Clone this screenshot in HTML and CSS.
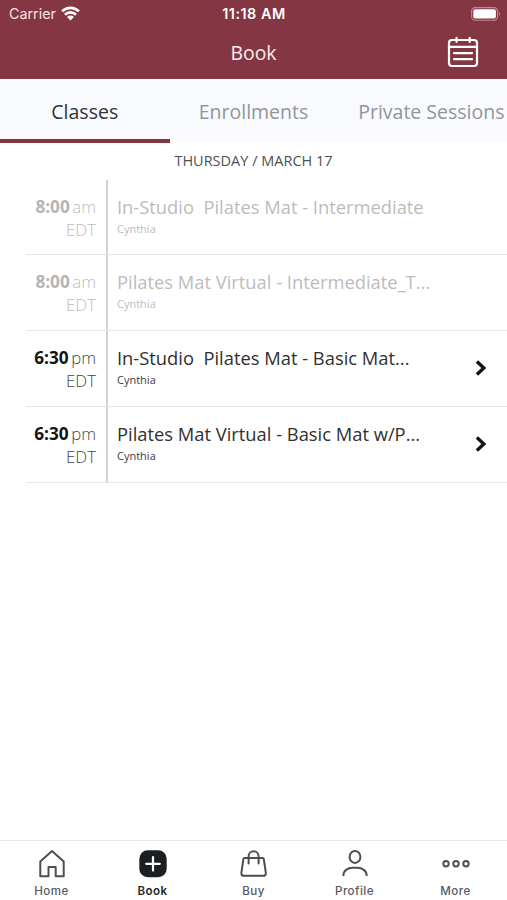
FILE: index.html
```html
<!DOCTYPE html>
<html lang="en">
<head>
<meta charset="utf-8">
<title>Book</title>
<link rel="stylesheet" href="styles.css">
</head>
<body>
<header class="header">
  <div class="status">
    <div class="carrier"><span>Carrier</span>
      <svg width="19" height="15" viewBox="0 0 19 15" fill="none" stroke="#fff" stroke-width="2.7"><path d="M1.1 5.3a12 12 0 0 1 16.8 0M4 8.7a7.8 7.8 0 0 1 11 0"/><path d="M6.1 11a4.8 4.8 0 0 1 6.8 0L9.5 14.4z" fill="#fff" stroke="none"/></svg>
    </div>
    <div class="clock">11:18 AM</div>
    <svg class="battery" width="30" height="14" viewBox="0 0 30 14"><rect x=".6" y=".6" width="26" height="12.6" rx="3.6" fill="none" stroke="#bd8b92" stroke-width="1.1"/><rect x="2.3" y="2.3" width="22.6" height="9.2" rx="2" fill="#fff"/><path d="M28 4.7q2 2.2 0 4.4z" fill="#bd8b92"/></svg>
  </div>
  <div class="titlebar">
    <h1>Book</h1>
    <svg class="calendar" width="32" height="32" viewBox="0 0 32 32" fill="none" stroke="#fff" stroke-width="2.2" stroke-linecap="round"><rect x="2" y="4" width="28" height="26" rx="3"/><path d="M2 10.8h28M9.5 1.8v4.2M22.7 1.8v4.2M7 17.2h18M7 23.2h18"/></svg>
  </div>
</header>
<nav class="tabs">
  <div class="tab selected"><span>Classes</span></div>
  <div class="tab"><span>Enrollments</span></div>
  <div class="tab private"><span>Private Sessions</span></div>
</nav>
<main>
  <h2 class="date">THURSDAY / MARCH 17</h2>
  <div class="list">
    <article class="row past">
      <div class="time"><div><b>8:00</b><span>am</span></div><div>EDT</div></div>
      <div class="info"><div class="name">In-Studio  Pilates Mat - Intermediate</div><div class="teacher">Cynthia</div></div>
    </article>
    <article class="row past">
      <div class="time"><div><b>8:00</b><span>am</span></div><div>EDT</div></div>
      <div class="info"><div class="name">Pilates Mat Virtual - Intermediate_T...</div><div class="teacher">Cynthia</div></div>
    </article>
    <article class="row">
      <div class="time"><div><b>6:30</b><span>pm</span></div><div>EDT</div></div>
      <div class="info"><div class="name">In-Studio  Pilates Mat - Basic Mat...</div><div class="teacher">Cynthia</div></div>
      <svg class="chevron" width="12" height="16" viewBox="0 0 12 16" fill="none" stroke="#151515" stroke-width="3.4"><path d="M1.9 1.6L8.8 8l-6.9 6.4"/></svg>
    </article>
    <article class="row">
      <div class="time"><div><b>6:30</b><span>pm</span></div><div>EDT</div></div>
      <div class="info"><div class="name">Pilates Mat Virtual - Basic Mat w/P...</div><div class="teacher">Cynthia</div></div>
      <svg class="chevron" width="12" height="16" viewBox="0 0 12 16" fill="none" stroke="#151515" stroke-width="3.4"><path d="M1.9 1.6L8.8 8l-6.9 6.4"/></svg>
    </article>
  </div>
</main>
<footer class="bottom">
  <div class="item"><svg width="30" height="30" viewBox="0 0 30 30"><path d="M3.3 12.5L15 2l11.7 10.5v14.7h-8V18h-7.2v9.2H3.3z"/></svg><span>Home</span></div>
  <div class="item active"><svg width="30" height="30" viewBox="0 0 30 30"><rect x="1.3" y="1.2" width="27.4" height="27" rx="8.5" fill="#1c1f22" stroke="none"/><path d="M15 8v13.6M8.2 14.8h13.6" stroke="#fff" stroke-width="2.2" stroke-linecap="round"/></svg><span>Book</span></div>
  <div class="item"><svg width="30" height="30" viewBox="0 0 30 30"><path d="M5.6 9h18q1 0 1.2 1l2 13.6q.3 3.2-2.6 3.2H5q-2.9 0-2.6-3.2l2-13.6q.2-1 1.2-1zM9.6 14.4V7.2a5 5 0 0 1 10 0v7.2" stroke-linecap="round"/></svg><span>Buy</span></div>
  <div class="item"><svg width="30" height="30" viewBox="0 0 30 30"><ellipse cx="15" cy="7.9" rx="5.4" ry="6"/><path d="M3.4 27v-.8c0-4.4 4.4-7.4 9-7.4h5.2c4.6 0 9 3 9 7.4v.8"/></svg><span>Profile</span></div>
  <div class="item"><svg width="30" height="30" viewBox="0 0 30 30"><circle cx="5" cy="14.8" r="2.7"/><circle cx="15" cy="14.8" r="2.7"/><circle cx="25" cy="14.8" r="2.7"/></svg><span>More</span></div>
</footer>
</body>
</html>
```
FILE: styles.css
```css
* { box-sizing: border-box; }
body { margin: 0; height: 900px; display: flex; flex-direction: column; background: #fff; font-family: "Open Sans", "Noto Sans", sans-serif; color: #303030; overflow: hidden; }
svg { display: block; flex: none; }
.header { height: 79px; flex: none; background: #843742; color: #fff; }
.status { height: 27px; display: grid; grid-template-columns: 1fr auto 1fr; align-items: center; padding: 0 6px 0 9px; font-family: Inter, sans-serif; font-size: 14px; }
.carrier { display: flex; align-items: center; gap: 5.5px; color: #f5e3e4; font-size: 14.3px; }
.clock { font-weight: 600; font-size: 14.4px; letter-spacing: .5px; margin-right: 2px; }
.battery { justify-self: end; }
.titlebar { height: 52px; display: grid; grid-template-columns: 1fr auto 1fr; align-items: center; padding-right: 28px; padding-left: 28px; }
h1 { grid-column: 2; margin: 0; font-size: 19.4px; font-weight: 400; line-height: 52px; color: #f9eced; }
.calendar { justify-self: end; margin-top: -2px; }
.tabs { height: 64px; flex: none; display: grid; grid-template-columns: 169.5px 168px 1fr; grid-template-rows: 64px; background: linear-gradient(#f8fafd 63px, #fff 63px); font-size: 19.5px; color: #92959b; line-height: 65px; text-align: center; }
.tab { white-space: nowrap; }
.private { text-align: right; padding-right: 2.5px; }
.selected { color: #303236; border-bottom: 4px solid #843742; }
.date { margin: 0; height: 37px; line-height: 36px; text-align: center; font-size: 14.5px; font-weight: 400; color: #505050; }
.row { height: 75.75px; margin-left: 26px; display: flex; border-bottom: 1px solid #e6e6e6; }
.row + .row:last-child { height: 76px; }
.list { margin-top: -.5px; }
.time { width: 82px; padding: 15px 10px 0 0; border-right: 2px solid #d2d2d2; text-align: right; font-size: 16.8px; line-height: 23px; font-weight: 300; color: #444; }
.time b { font-size: 17.2px; font-weight: 700; color: #151515; margin-right: 2.5px; }
.info { flex: 1; padding: 14px 0 0 9px; }
.name { font-size: 18.33px; line-height: 26px; white-space: pre; color: #303030; }
.teacher { font-size: 11px; line-height: 17px; color: #3c3c3c; }
.past .time, .past .name, .past .teacher { color: #bcbcbc; }
.past b { color: #b5b5b5; }
.chevron { align-self: center; margin-right: 20px; }
.bottom { margin-top: auto; height: 60px; flex: none; border-top: 1px solid #e5e6e7; display: grid; grid-template-columns: repeat(5, 101px); justify-content: center; font-family: Inter, sans-serif; font-size: 11.6px; font-weight: 500; letter-spacing: .45px; color: #565a5e; }
.item { display: flex; flex-direction: column; align-items: center; padding-top: 8px; line-height: 15px; gap: 5px; }
.item svg { fill: none; stroke: #4c5054; stroke-width: 2; stroke-linejoin: round; }
.active { color: #25282b; font-weight: 600; }
```
